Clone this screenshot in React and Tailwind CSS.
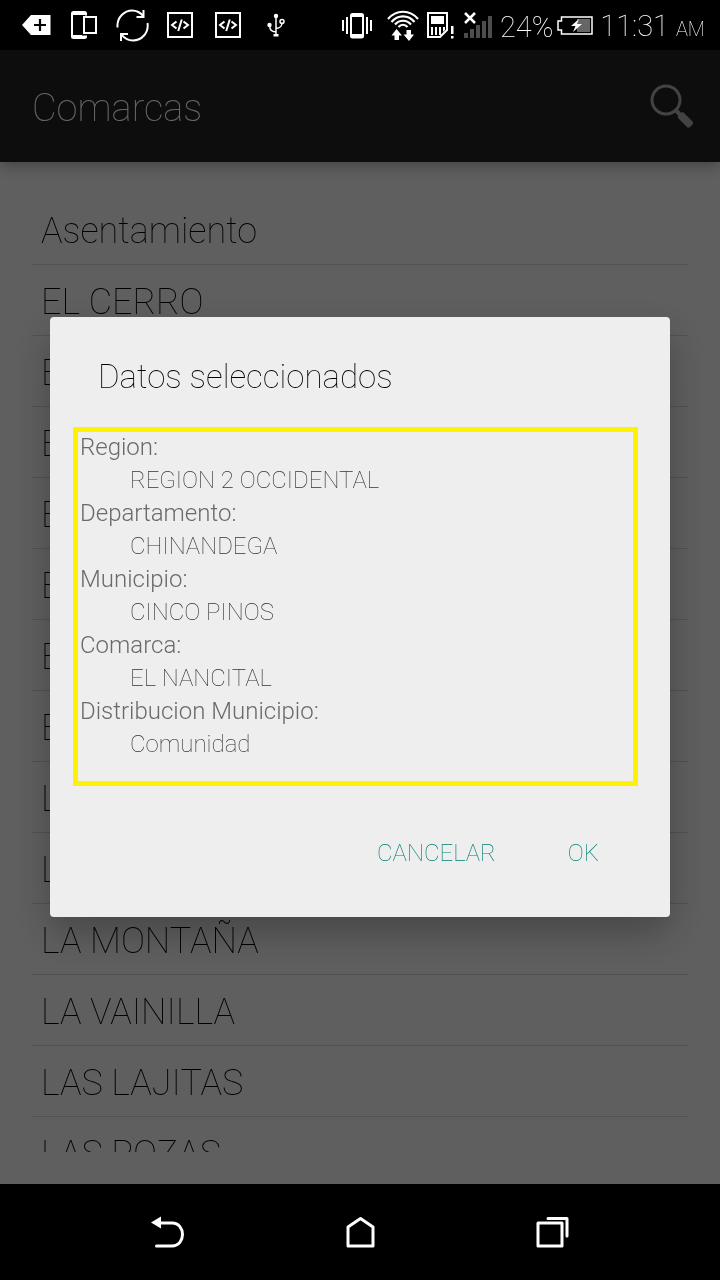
import React from "react";

const comarcas = [
  "Asentamiento",
  "EL CERRO",
  "EL",
  "EL",
  "EL",
  "EL",
  "EL",
  "EL",
  "LA",
  "LA",
  "LA MONTAÑA",
  "LA VAINILLA",
  "LAS LAJITAS",
  "LAS POZAS",
];

const datos = [
  ["Region:", "REGION 2 OCCIDENTAL"],
  ["Departamento:", "CHINANDEGA"],
  ["Municipio:", "CINCO PINOS"],
  ["Comarca:", "EL NANCITAL"],
  ["Distribucion Municipio:", "Comunidad"],
];

function CodeIcon() {
  return (
    <svg width="26" height="26" viewBox="0 0 26 26" fill="none" stroke="#fff">
      <rect x="1" y="1" width="24" height="24" strokeWidth="2" />
      <path d="M9.500 9.500 5 13l4.500 3.500M16.500 9.500 21 13l-4.500 3.500M14.800 7.500l-3.600 11.500" strokeWidth="2" />
    </svg>
  );
}

function StatusBar() {
  return (
    <div className="flex h-[50px] shrink-0 items-center justify-between bg-black pr-[15px] pl-[22px] text-white">
      <div className="flex items-center">
        <svg width="29" height="20" viewBox="0 0 29 20">
          <path d="M0 10 9 0h19.500v20H9z" fill="#fff" />
          <path d="M18 4v12M12 10h12" stroke="#000" strokeWidth="2.200" />
        </svg>
        <svg className="ml-5" width="27" height="29" viewBox="0 0 27 29">
          <rect width="16" height="28" rx="2.500" fill="#fff" />
          <rect x="2" y="4" width="12" height="20" fill="#000" />
          <rect x="11" y="4.500" width="16" height="20" fill="#000" />
          <rect x="13" y="6" width="12" height="16" fill="none" stroke="#fff" strokeWidth="2" />
        </svg>
        <svg className="ml-[18px]" width="33" height="33" viewBox="0 0 33 33" fill="none" stroke="#fff" strokeWidth="2">
          <path d="M1.500 18.500C.500 8 9 1.500 16 1.500c5 0 8.500 2 11.500 6M27.500 1v7h-7M31.500 14c1.500 10-6 17.500-14.500 17.500-5 0-9-2.500-12-6.500M5 32v-7h7" />
        </svg>
        <div className="ml-[18px] flex gap-[22px]">
          <CodeIcon />
          <CodeIcon />
        </div>
        <svg className="ml-[26px]" width="18" height="24" viewBox="0 0 18 24" fill="none" stroke="#fff" strokeWidth="1.500">
          <path d="M9 3v19M9 19C4 18.500 3 17 2.500 12.500M9 15.500c4.500-.5 6-2 6-6" />
          <circle cx="9" cy="3" r="2.200" fill="#fff" stroke="none" />
          <circle cx="2.500" cy="12" r="2.200" fill="#fff" stroke="none" />
          <circle cx="15" cy="8.500" r="2" />
          <rect x="6.500" y="21" width="5" height="2.500" fill="#fff" stroke="none" />
        </svg>
      </div>
      <div className="flex items-center">
        <svg width="30" height="27" viewBox="0 0 30 27">
          <rect x="8" y="1" width="14" height="25.500" rx="2.500" fill="#fff" />
          <rect x="10" y="5" width="10" height="17" fill="#000" />
          <path d="M1 8v11M5 5v17M25 5v17M29 8v11" stroke="#fff" strokeWidth="2" />
        </svg>
        <svg className="ml-[15px]" width="32" height="32" viewBox="0 0 32 32" fill="none" stroke="#fff" strokeWidth="2.200">
          <path d="M1 10C9 .300 23 .300 31 10M4.500 13c6-7.500 17-7.500 23 0M8 15.500c4.500-5 11.500-5 16 0M11.500 18c2.500-3 6.500-3 9 0" />
          <path d="M9.500 20 15 26.500h-3V31H7.500v-4.500H4.500zM22 32l-5.500-6.500h3V21H24v4.500h3z" fill="#fff" stroke="none" />
        </svg>
        <svg className="ml-2" width="27" height="27" viewBox="0 0 27 27">
          <path d="M1 1h19v17l-7 7H1z" fill="none" stroke="#fff" strokeWidth="2" />
          <path d="M4 4h13v8H4zM4 15h2v8H4zM8 15h2v8H8zM12 15h2v8h-2zM16 15h2v3l-2 2zM24 14h2.500v8H24zM24 24h2.500v2.500H24z" fill="#fff" />
        </svg>
        <svg className="ml-[10px]" width="29" height="28" viewBox="0 0 29 28">
          <path d="M0 22h4v5H0zM6 18h4v9H6zM12 14h4v13h-4zM18 10h4v17h-4zM24 5h4v22h-4z" fill="#4d4d4d" />
          <path d="m1 2 10 10M11 2 1 12" stroke="#fff" strokeWidth="2.500" />
        </svg>
        <span className="ml-[7px] pt-1 text-[29px] leading-8">24%</span>
        <svg className="ml-1" width="36" height="19" viewBox="0 0 36 19">
          <rect x="20" y="3" width="13" height="13" fill="#666" />
          <path d="M4.500 1h30.500v17H4.500v-4H1V5h3.500z" fill="none" stroke="#fff" strokeWidth="1.500" />
          <path d="m22 3-8 7h4.500L16 16l9-8h-5z" fill="#fff" />
        </svg>
        <span className="ml-[7px] pt-1 text-[29px] leading-8">
          11:31 <span className="text-[20px]">AM</span>
        </span>
      </div>
    </div>
  );
}

function Dialog() {
  return (
    <div className="absolute inset-0 flex items-center justify-center bg-black/60 px-[50px]">
      <section
        role="dialog"
        aria-labelledby="dialog-title"
        className="w-full rounded-[4px] bg-[#eeeeee] pr-8 pb-9 pl-[23px] shadow-[0_16px_40px_rgba(0,0,0,0.28)]"
      >
        <h2 id="dialog-title" className="pt-[38px] pb-7 pl-[25px] text-[33px] leading-11 text-black">
          Datos seleccionados
        </h2>
        <div className="border-5 border-[#fff200] pb-5 pl-0.5">
          <dl className="-mt-px text-2xl leading-[33px] text-[#6a6a6a]">
            {datos.map(([label, value]) => (
              <div key={label}>
                <dt className="font-light">{label}</dt>
                <dd className="pl-[50px] text-[#333333]">{value}</dd>
              </div>
            ))}
          </dl>
        </div>
        <div className="mt-[39px] flex justify-end gap-10 pr-[7px] text-2xl leading-[56px] text-[#008074]">
          <button type="button" className="px-4">CANCELAR</button>
          <button type="button" className="px-4 pr-8">OK</button>
        </div>
      </section>
    </div>
  );
}

export default function App() {
  return (
    <div className="flex h-screen flex-col font-['Roboto',sans-serif] font-thin antialiased will-change-transform">
      <StatusBar />
      <div className="relative flex min-h-0 flex-1 flex-col bg-[#eeeeee]">
        <header className="flex h-28 shrink-0 items-center justify-between bg-[#212121] pr-[26px] pl-8 text-white shadow-[0_4px_14px_rgba(0,0,0,0.3)]">
          <h1 className="pt-1 text-[38px] leading-12">Comarcas</h1>
          <button type="button" aria-label="Buscar">
            <svg width="44" height="44" viewBox="0 0 44 44">
              <circle cx="16" cy="16" r="14" fill="none" stroke="#a8a8a8" strokeWidth="3" />
              <path d="m25.500 26 4 4" stroke="#a8a8a8" strokeWidth="4" />
              <path d="m28 30 5-2 9.500 9.500q1 1.500 0 3l-2.500 2.500q-1.500 1-3 0L28 34z" fill="#a8a8a8" />
            </svg>
          </button>
        </header>
        <main className="flex min-h-0 flex-1 flex-col p-8">
          <ul className="min-h-0 flex-1 overflow-hidden">
            {comarcas.map((name, i) => (
              <li
                key={i}
                className="flex h-[71px] items-center border-b border-[#cccccc] px-[9px] pt-1 text-[36px] leading-12 text-black"
              >
                {name}
              </li>
            ))}
          </ul>
        </main>
        <Dialog />
      </div>
      <nav className="grid h-24 shrink-0 grid-cols-[264px_1fr_264px] items-center justify-items-center bg-black px-9 text-white">
        <button type="button" aria-label="Atrás">
          <svg width="34" height="32" viewBox="0 0 34 32" fill="none" stroke="#fff" strokeWidth="3" strokeLinecap="round">
            <path d="M9 7h12c14 0 14 23 0 23H5.500" />
            <path d="M0 6.500 10 .500v12z" fill="#fff" stroke="none" />
          </svg>
        </button>
        <button type="button" aria-label="Inicio">
          <svg width="29" height="32" viewBox="0 0 29 32" fill="none" stroke="#fff" strokeWidth="3" strokeLinejoin="round">
            <path d="M2 11 14.500 2.500 27 11v19H2z" />
          </svg>
        </button>
        <button type="button" aria-label="Recientes">
          <svg width="33" height="32" viewBox="0 0 33 32" fill="none" stroke="#fff" strokeWidth="3" strokeLinejoin="round" strokeLinecap="round">
            <path d="M2 7h24v23H2zM12 2.500h19V20" />
          </svg>
        </button>
      </nav>
    </div>
  );
}
